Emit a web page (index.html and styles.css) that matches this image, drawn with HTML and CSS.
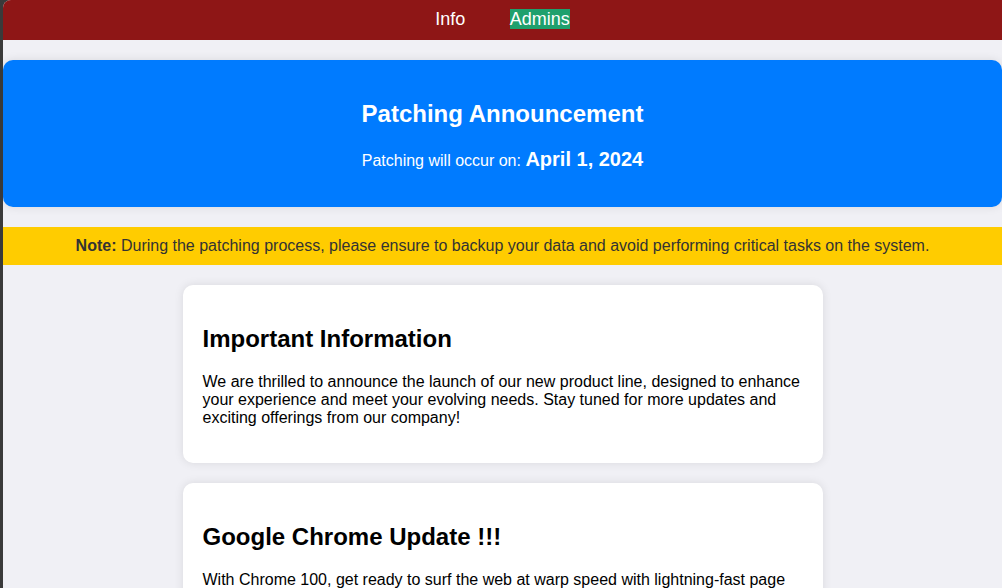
FILE: index.html
```html
<!DOCTYPE html>
<html lang="en">
<head>
<meta charset="utf-8">
<title>Patching Announcement</title>
<link rel="stylesheet" href="styles.css">
</head>
<body>
<div class="page">
  <nav class="topnav">
    <a href="#" class="nav-link">Info</a>
    <a href="#" class="nav-link active">Admins</a>
  </nav>

  <section class="banner">
    <h2 class="banner-title">Patching Announcement</h2>
    <p class="banner-text">Patching will occur on: <span class="banner-date">April 1, 2024</span></p>
  </section>

  <div class="note"><strong>Note:</strong> During the patching process, please ensure to backup your data and avoid performing critical tasks on the system.</div>

  <div class="cards">
    <article class="card">
      <h2 class="card-title">Important Information</h2>
      <p class="card-text">We are thrilled to announce the launch of our new product line, designed to enhance your experience and meet your evolving needs. Stay tuned for more updates and exciting offerings from our company!</p>
    </article>
    <article class="card">
      <h2 class="card-title">Google Chrome Update !!!</h2>
      <p class="card-text">With Chrome 100, get ready to surf the web at warp speed with lightning-fast page loading, enhanced security features, and a sleek new design that makes browsing easier than ever.</p>
    </article>
  </div>
</div>
</body>
</html>
```

FILE: styles.css
```css
html {
  background: #3a3a3a;
  height: 100%;
}

body {
  margin: 0 0 0 3px;
  min-height: 100%;
  background: #f0f0f5;
  border-top-left-radius: 8px;
  overflow: hidden;
  font-family: "Liberation Sans", Arial, sans-serif;
  color: #000;
}

.topnav {
  background: #8e1616;
  height: 40px;
  box-sizing: border-box;
  padding: 8px 0 10px;
  line-height: 22px;
  text-align: center;
}

.nav-link {
  color: #fff;
  text-decoration: none;
  font-size: 18px;
  margin: 0 20px;
}

.nav-link.active {
  background: #1fa06d;
}

.banner {
  margin-top: 20px;
  background: #007bff;
  color: #fff;
  border-radius: 10px;
  padding: 20px;
  text-align: center;
  box-shadow: 0 0 10px rgba(0, 0, 0, 0.1);
}

.banner-title {
  font-size: 24px;
  margin: 20px 0;
}

.banner-text {
  font-size: 16px;
  margin: 16px 0;
}

.banner-date {
  font-size: 20px;
  font-weight: bold;
}

.note {
  margin-top: 20px;
  background: #ffcc00;
  color: #333;
  padding: 10px;
  line-height: 18px;
  font-size: 16px;
  text-align: center;
}

.cards {
  display: flex;
  flex-direction: column;
  align-items: center;
  gap: 20px;
  padding: 20px 0;
}

.card {
  width: 600px;
  background: #fff;
  border-radius: 10px;
  padding: 20px;
  box-shadow: 0 0 10px rgba(0, 0, 0, 0.1);
}

.card-title {
  font-size: 24px;
  margin: 20px 0;
}

.card-text {
  font-size: 16px;
  line-height: 18px;
  margin: 16px 0;
}
```
